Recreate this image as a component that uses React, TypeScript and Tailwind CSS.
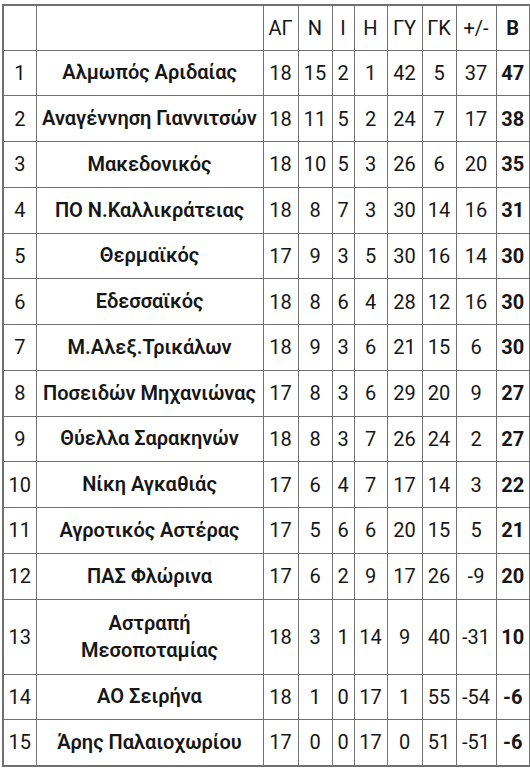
import React from "react";

const rows: [number, string, number, number, number, number, number, number, number, number][] = [
  [1, "Αλμωπός Αριδαίας", 18, 15, 2, 1, 42, 5, 37, 47],
  [2, "Αναγέννηση Γιαννιτσών", 18, 11, 5, 2, 24, 7, 17, 38],
  [3, "Μακεδονικός", 18, 10, 5, 3, 26, 6, 20, 35],
  [4, "ΠΟ Ν.Καλλικράτειας", 18, 8, 7, 3, 30, 14, 16, 31],
  [5, "Θερμαϊκός", 17, 9, 3, 5, 30, 16, 14, 30],
  [6, "Εδεσσαϊκός", 18, 8, 6, 4, 28, 12, 16, 30],
  [7, "Μ.Αλεξ.Τρικάλων", 18, 9, 3, 6, 21, 15, 6, 30],
  [8, "Ποσειδών Μηχανιώνας", 17, 8, 3, 6, 29, 20, 9, 27],
  [9, "Θύελλα Σαρακηνών", 18, 8, 3, 7, 26, 24, 2, 27],
  [10, "Νίκη Αγκαθιάς", 17, 6, 4, 7, 17, 14, 3, 22],
  [11, "Αγροτικός Αστέρας", 17, 5, 6, 6, 20, 15, 5, 21],
  [12, "ΠΑΣ Φλώρινα", 17, 6, 2, 9, 17, 26, -9, 20],
  [13, "Αστραπή Μεσοποταμίας", 18, 3, 1, 14, 9, 40, -31, 10],
  [14, "ΑΟ Σειρήνα", 18, 1, 0, 17, 1, 55, -54, -6],
  [15, "Άρης Παλαιοχωρίου", 17, 0, 0, 17, 0, 51, -51, -6],
];

const headers = ["ΑΓ", "Ν", "Ι", "Η", "ΓΥ", "ΓΚ", "+/-"];
const cell = "border border-[#707070] text-center align-middle p-0 whitespace-nowrap";

export default function App() {
  return (
    <div
      className="w-[530px] h-[768px] bg-white pl-[2px] pt-[4px] overflow-hidden text-[#161616]"
      style={{ fontFamily: "Roboto, 'Noto Sans', sans-serif" }}
    >
      <table className="w-[527px] table-fixed border-collapse border-2 border-[#707070] text-[20px]">
        <colgroup>
          <col className="w-[33px]" />
          <col className="w-[227px]" />
          <col className="w-[35px]" />
          <col className="w-[34px]" />
          <col className="w-[22px]" />
          <col className="w-[33px]" />
          <col className="w-[35px]" />
          <col className="w-[34px]" />
          <col className="w-[40px]" />
          <col className="w-[34px]" />
        </colgroup>
        <thead>
          <tr className="h-[45px]">
            <th className={cell}></th>
            <th className={cell}></th>
            {headers.map((h) => (
              <th key={h} className={`${cell} font-normal`}>
                {h}
              </th>
            ))}
            <th className={`${cell} font-bold`}>Β</th>
          </tr>
        </thead>
        <tbody>
          {rows.map((r) => (
            <tr key={r[0]} className={r[0] === 13 ? "h-[75px]" : "h-[45.75px]"}>
              <td className={cell}>{r[0]}</td>
              <td className={`${cell} font-semibold leading-[27px]`}>
                {r[0] === 13 ? (
                  <>
                    Αστραπή
                    <br />
                    Μεσοποταμίας
                  </>
                ) : (
                  r[1]
                )}
              </td>
              {r.slice(2, 9).map((v, i) => (
                <td key={i} className={cell}>
                  {v}
                </td>
              ))}
              <td className={`${cell} font-bold`}>{r[9]}</td>
            </tr>
          ))}
        </tbody>
      </table>
    </div>
  );
}
